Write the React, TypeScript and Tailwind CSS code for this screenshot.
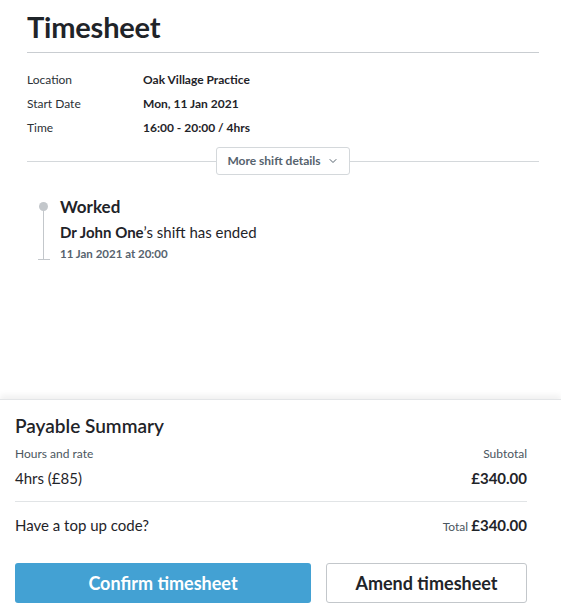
import { ChevronDown } from "lucide-react"

const details = [
  { label: "Location", value: "Oak Village Practice" },
  { label: "Start Date", value: "Mon, 11 Jan 2021" },
  { label: "Time", value: "16:00 - 20:00 / 4hrs" },
]

export default function App() {
  return (
    <div className="flex h-[615px] w-[561px] flex-col bg-white font-['Lato','Liberation_Sans',sans-serif] text-[#1f2429]">
      {/* Header + shift info */}
      <div className="flex-1 pl-[27px] pr-[22px]">
        <h1 className="pt-[9px] pb-[8px] text-[29px] font-bold leading-[35px] tracking-[-0.2px]">Timesheet</h1>
        <div className="border-t border-[#c9cdd1]" />

        <div className="mt-[15px] flex flex-col">
          {details.map((d) => (
            <div key={d.label} className="flex h-[24px] items-center text-[12px]">
              <span className="w-[116px] text-[#2b3136]">{d.label}</span>
              <span className="font-bold">{d.value}</span>
            </div>
          ))}
        </div>

        <div className="mt-[7px] flex items-center">
          <div className="h-px flex-1 bg-[#d4d8db]" />
          <button className="flex h-[28px] w-[134px] items-center justify-center gap-[6px] rounded-[3px] border border-[#d4d8db] bg-white text-[12px] font-bold text-[#56636e]">
            More shift details
            <ChevronDown className="h-[12px] w-[12px]" strokeWidth={2} />
          </button>
          <div className="h-px flex-1 bg-[#d4d8db]" />
        </div>

        {/* Timeline */}
        <div className="mt-[22px] flex">
          <div className="flex w-[33px] flex-col items-center">
            <div className="mt-[5px] h-[9px] w-[9px] rounded-full bg-[#c3c7cb]" />
            <div className="h-[48px] w-px bg-[#c3c7cb]" />
            <div className="h-px w-[12px] bg-[#c3c7cb]" />
          </div>
          <div className="flex flex-col">
            <div className="text-[17px] font-bold leading-[20px]">Worked</div>
            <div className="mt-[6px] text-[15px] leading-[18px]">
              <span className="font-bold">Dr John One</span>’s shift has ended
            </div>
            <div className="mt-[4px] text-[11.5px] font-bold text-[#56636e]">11 Jan 2021 at 20:00</div>
          </div>
        </div>
      </div>

      {/* Payable summary */}
      <div className="relative border-t border-[#e3e5e7] pl-[15px] pr-[34px] pb-[12px] shadow-[0_-4px_6px_rgba(0,0,0,0.06)]">
        <div className="pt-[15px] text-[19px] font-semibold leading-[22px]">Payable Summary</div>
        <div className="mt-[8px] flex justify-between text-[12px] text-[#4b5660]">
          <span>Hours and rate</span>
          <span>Subtotal</span>
        </div>
        <div className="mt-[6px] flex justify-between text-[15px] leading-[18px]">
          <span>4hrs (£85)</span>
          <span className="font-bold">£340.00</span>
        </div>
        <div className="mt-[14px] border-t border-[#e1e4e6]" />
        <div className="mt-[14px] flex items-baseline justify-between text-[15px] leading-[18px]">
          <span>Have a top up code?</span>
          <span>
            <span className="text-[12px] text-[#4b5660]">Total </span>
            <span className="font-bold">£340.00</span>
          </span>
        </div>
        <div className="mt-[27px] flex gap-[15px]">
          <button className="h-[40px] w-[296px] rounded-[3px] bg-[#43a1d3] text-[18px] font-bold text-white">
            Confirm timesheet
          </button>
          <button className="h-[40px] flex-1 rounded-[3px] border border-[#c3c7cb] bg-white text-[18px] font-bold text-[#1f2429]">
            Amend timesheet
          </button>
        </div>
      </div>
    </div>
  )
}
